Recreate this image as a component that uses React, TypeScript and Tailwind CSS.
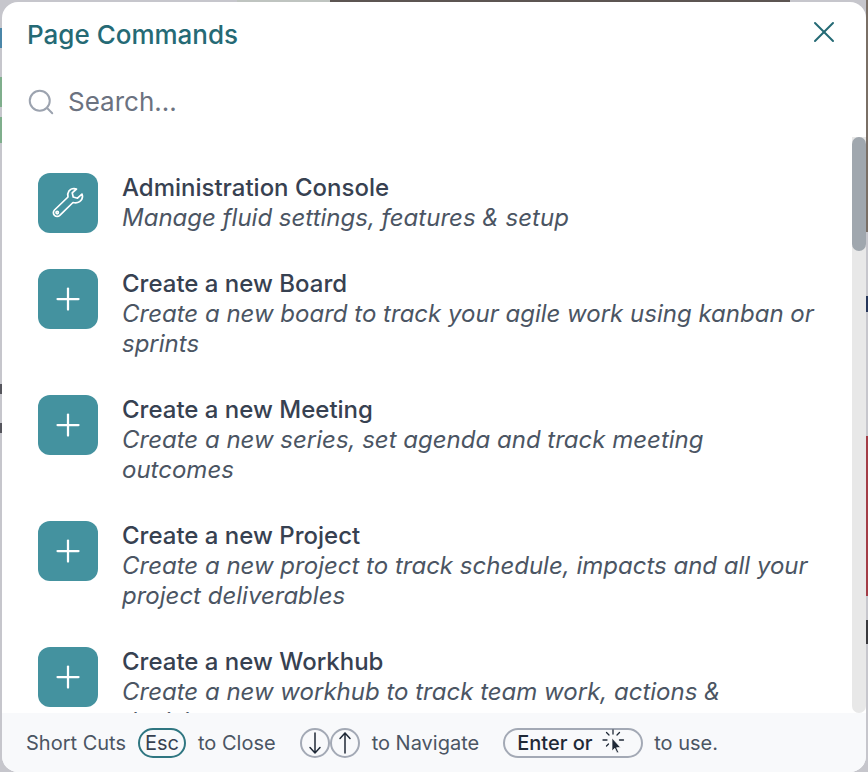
import { Plus, Search, X } from "lucide-react";

const COMMANDS = [
  { title: "Administration Console", desc: ["Manage fluid settings, features & setup"], icon: "wrench" },
  { title: "Create a new Board", desc: ["Create a new board to track your agile work using kanban or", "sprints"], icon: "plus" },
  { title: "Create a new Meeting", desc: ["Create a new series, set agenda and track meeting", "outcomes"], icon: "plus" },
  { title: "Create a new Project", desc: ["Create a new project to track schedule, impacts and all your", "project deliverables"], icon: "plus" },
  { title: "Create a new Workhub", desc: ["Create a new workhub to track team work, actions &", "decisions"], icon: "plus" },
];

function WrenchIcon() {
  return (
    <svg width="32" height="32" viewBox="0 0 32 32" fill="none" stroke="#fff" strokeWidth="1.7" strokeLinejoin="round">
      <path d="M22 1.500C17.500 1.500 15 5.500 16 10L2.500 23C1 24.500 1 26.800 2.500 28.300C4 29.800 6.300 29.800 7.800 28.300L21 15.500C26 17 30.500 13.800 30.500 9.300L30 7L25.500 11.200L21.200 10L20.200 5.800L24.500 2Z" />
      <circle cx="5.200" cy="25.600" r="1.200" />
    </svg>
  );
}

function ClickIcon() {
  return (
    <svg width="24" height="28" viewBox="0 0 24 28" fill="none" className="shrink-0">
      <g stroke="#1f2937" strokeWidth="1.3" strokeLinecap="round">
        <path d="M11 1v4M4.500 3.500l2.500 2.500M17.500 3.500l-2.500 2.500M1 11h4M17.500 11h4M6.500 15l-2 2" />
      </g>
      <path d="M10 9l0 13 2.800-2.700 2.200 4.700 1.700-.8-2.100-4.500 3.900-.3z" fill="#1f2937" stroke="#fff" strokeWidth="0.7" />
    </svg>
  );
}

function ThinArrow({ up }: { up?: boolean }) {
  return (
    <svg width="14" height="24" viewBox="0 0 14 24" fill="none" className={up ? "rotate-180" : ""}>
      <path d="M7 2v20M2 16.500L7 22l5-5.500" stroke="#1f2937" strokeWidth="1.500" strokeLinecap="round" strokeLinejoin="round" />
    </svg>
  );
}

export default function App() {
  return (
    <div className="relative h-[772px] w-[868px] overflow-hidden bg-[#c6c6cc] px-[2px] pt-[2px] font-['Inter',sans-serif]">
      {/* bits of the page behind the dialog */}
      <div className="absolute left-0 top-[28px] h-[20px] w-[2px] bg-[#4a86a8]" />
      <div className="absolute left-0 top-[77px] h-[30px] w-[2px] bg-[#7fae8c]" />
      <div className="absolute left-0 top-[117px] h-[26px] w-[2px] bg-[#7fae8c]" />
      <div className="absolute left-0 top-[384px] h-[10px] w-[2px] bg-[#55555c]" />
      <div className="absolute left-0 top-[423px] h-[10px] w-[2px] bg-[#55555c]" />
      <div className="absolute right-0 top-0 h-[232px] w-[2px] bg-[#7a6f66]" />
      <div className="absolute right-0 top-[296px] h-[16px] w-[2px] bg-[#26365a]" />
      <div className="absolute right-0 top-[436px] h-[160px] w-[2px] bg-[#a33c46]" />
      <div className="absolute right-0 top-[620px] h-[24px] w-[2px] bg-[#3a3a3e]" />
      <div className="absolute left-[237px] top-0 h-[2px] w-[93px] bg-[#bfc4c0]" />
      <div className="absolute left-[330px] top-0 h-[2px] w-[460px] bg-[#5c5552]" />

      <div className="relative flex h-[770px] flex-col overflow-hidden rounded-[16px] bg-white">
        {/* Header */}
        <div className="flex h-[64px] shrink-0 items-center justify-between pl-[25px] pr-[24px]">
          <h2 className="text-[26px] font-medium text-[#256a75]">Page Commands</h2>
          <X className="mb-[4px] h-[36px] w-[36px] text-[#256a75]" strokeWidth={1.33} />
        </div>

        {/* Search */}
        <div className="flex h-[71px] shrink-0 items-center gap-[12px] pl-[24px]">
          <Search className="h-[30px] w-[30px] text-[#9ca3af]" strokeWidth={1.6} />
          <span className="text-[26px] text-[#6b7280]">Search...</span>
        </div>

        {/* List */}
        <div className="flex min-h-0 flex-1">
          <div className="min-w-0 flex-1 overflow-hidden pl-[36px] pt-[36px]">
            {COMMANDS.map((item) => (
              <div key={item.title} className="mb-[36px] flex gap-[24px]">
                <div className="flex h-[60px] w-[60px] shrink-0 items-center justify-center rounded-[12px] bg-[#44929f] text-white">
                  {item.icon === "wrench" ? (
                    <WrenchIcon />
                  ) : (
                    <Plus className="h-[36px] w-[36px]" strokeWidth={1.5} />
                  )}
                </div>
                <div className="min-w-0">
                  <div className="text-[24px] font-medium leading-[30px] text-[#374151]">{item.title}</div>
                  {item.desc.map((line) => (
                    <div key={line} className="whitespace-nowrap text-[24px] italic leading-[30px] text-[#4b5563]">
                      {line}
                    </div>
                  ))}
                </div>
              </div>
            ))}
          </div>
          {/* Scrollbar */}
          <div className="w-[14px] shrink-0 rounded-b-full bg-[#e8e8e8]">
            <div className="h-[114px] w-[14px] rounded-full bg-[#a0a7ae]" />
          </div>
        </div>

        {/* Footer */}
        <div className="flex h-[59px] shrink-0 items-center bg-[#f8f9fb] pl-[24px] pt-[1px] text-[20px] text-[#4b5563]">
          <span>Short Cuts</span>
          <span className="ml-[12px] flex h-[30px] w-[48px] items-center justify-center rounded-full border-2 border-[#2f7681] text-[#374151]">
            Esc
          </span>
          <span className="ml-[12px]">to Close</span>
          <span className="ml-[24px] flex h-[30px] w-[30px] items-center justify-center rounded-full border-2 border-[#a3a9b5]">
            <ThinArrow />
          </span>
          <span className="flex h-[30px] w-[30px] items-center justify-center rounded-full border-2 border-[#a3a9b5]">
            <ThinArrow up />
          </span>
          <span className="ml-[12px]">to Navigate</span>
          <span className="ml-[24px] flex h-[30px] w-[140px] items-center rounded-full border-2 border-[#a3a9b5] pl-[12px] font-medium text-[#1f2937]">
            Enter or
            <span className="ml-[9px]">
              <ClickIcon />
            </span>
          </span>
          <span className="ml-[11px]">to use.</span>
        </div>
      </div>
    </div>
  );
}
